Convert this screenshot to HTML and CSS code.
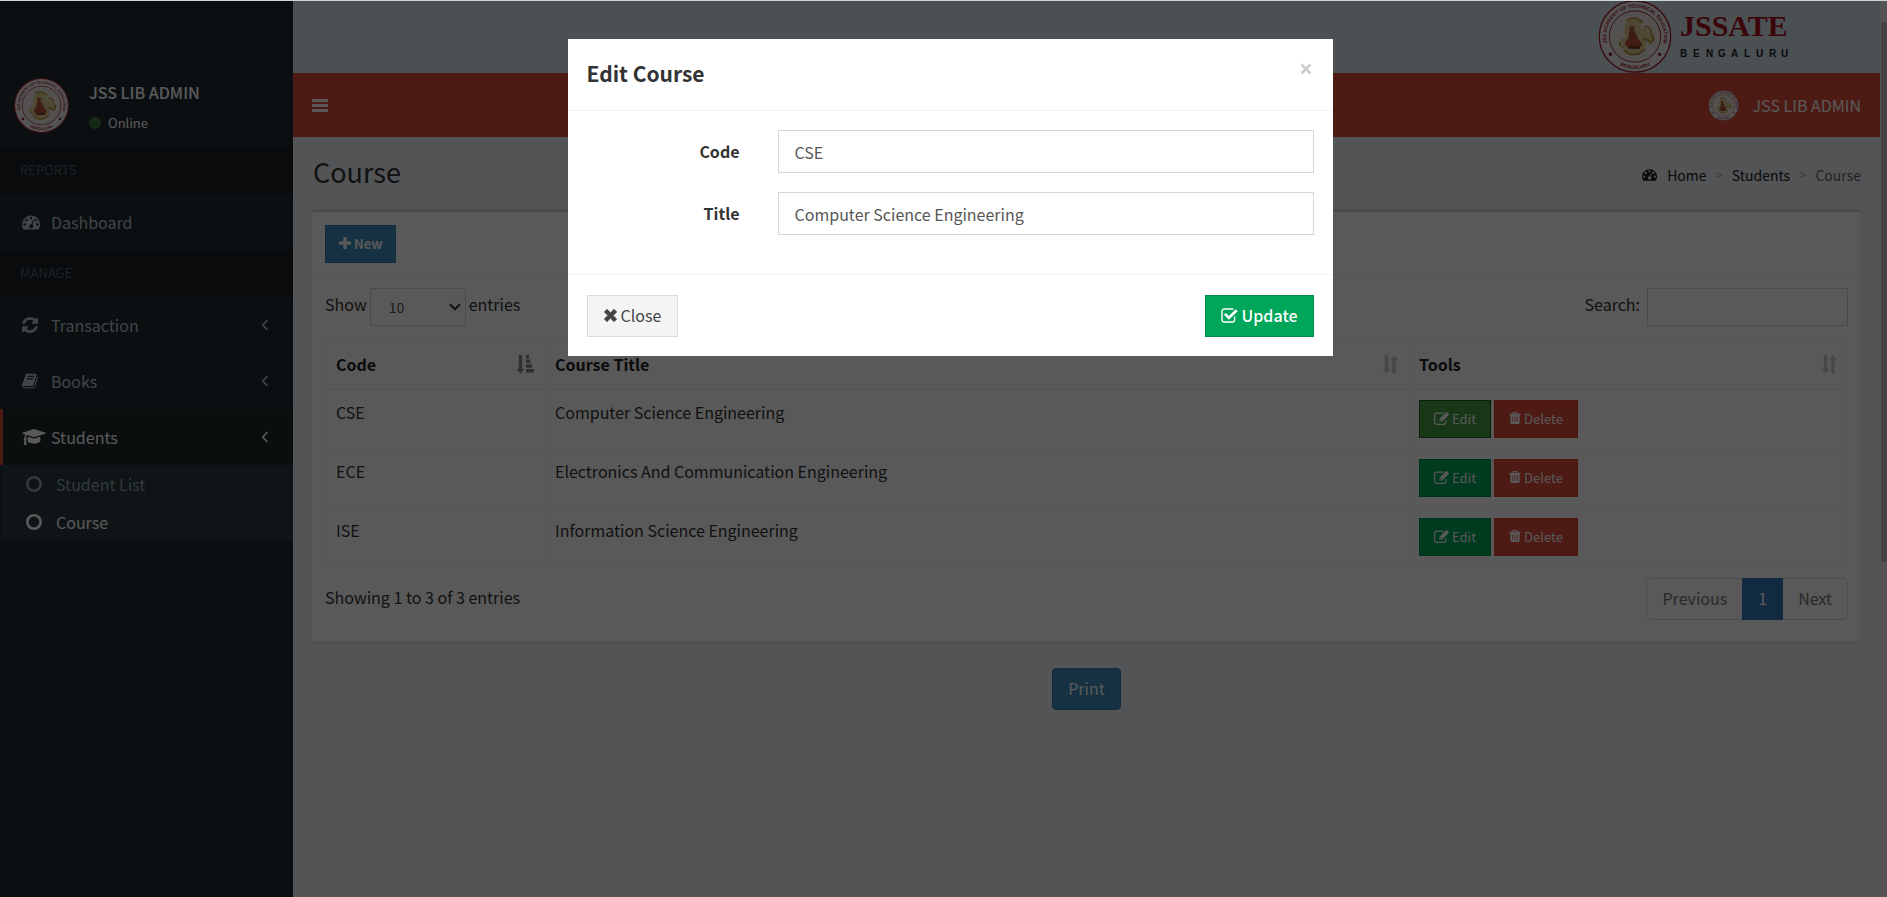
FILE: index.html
```
<!DOCTYPE html>
<html lang="en">
<head>
<meta charset="utf-8">
<title>Course</title>
<link rel="stylesheet" href="styles.css">
</head>
<body>
<svg class="defs" aria-hidden="true">
<symbol id="i-dash" viewBox="0 0 18 14"><path fill-rule="evenodd" d="M9 0a9 9 0 0 0-9 9c0 1.700.5 3.400 1.400 4.700.1.200.3.300.6.300h14c.3 0 .5-.1.600-.3A9 9 0 0 0 9 0ZM2.600 7.700a1.300 1.300 0 1 1 0 2.600 1.300 1.300 0 0 1 0-2.600ZM4.500 3.200a1.300 1.300 0 1 1 0 2.600 1.300 1.300 0 0 1 0-2.600ZM9 1.300a1.300 1.300 0 1 1 0 2.600 1.300 1.300 0 0 1 0-2.600Zm4.500 1.900a1.300 1.300 0 1 1 0 2.600 1.300 1.300 0 0 1 0-2.600Zm1.900 4.500a1.300 1.300 0 1 1 0 2.600 1.300 1.300 0 0 1 0-2.600ZM10.700 4.900l.9.300-1 3.900c.6.500.8 1.200.6 1.900a2 2 0 1 1-1.600-2.300Z"/></symbol>
<symbol id="i-refresh" viewBox="0 0 1536 1536"><path d="M1511 928q0 5-1 7-64 268-268 434.500T764 1536q-146 0-282.500-55T238 1324l-129 129q-19 19-45 19t-45-19-19-45V960q0-26 19-45t45-19h448q26 0 45 19t19 45-19 45l-137 137q71 66 161 102t187 36q134 0 250-65t186-179q11-17 53-117 8-23 30-23h192q13 0 22.500 9.500t9.500 22.500zm25-800v448q0 26-19 45t-45 19h-448q-26 0-45-19t-19-45 19-45l138-138Q969 256 768 256q-134 0-250 65T332 500q-11 17-53 117-8 23-30 23H50q-13 0-22.500-9.500T18 608v-7q65-268 270-434.500T768 0q146 0 284 55.500T1297 212l130-129q19-19 45-19t45 19 19 45z"/></symbol>
<symbol id="i-book" viewBox="0 -60 1664 1536"><path d="M1639 266q40 57 18 129l-275 906q-19 64-76.500 107.500T1183 1452H260q-77 0-148.500-53.500T12 1267q-24-67-2-127 0-4 3-27t4-37q1-8-3-21.500t-3-19.500q2-11 8-21t16.500-23.500T52 967q23-38 45-91.500t30-91.500q3-10 .5-30t-.5-28q3-11 17-28t17-23q21-36 42-92t25-90q1-9-2.500-32t.5-28q4-13 22-30.500t22-22.500q19-26 42.500-84.500T340 227q1-8-3-25.500t-2-26.500q2-8 9-18t18-23 17-21q8-12 16.500-30.500t15-35 16-36 19.500-32T469.500-44 506-55.500t47.500 5.500l-1 3q38-9 51-9h761q74 0 114 56t18 130l-274 906q-36 119-71.500 153.500T1023 1224H154q-27 0-38 15-11 16-1 43 24 70 144 70h923q29 0 56-15.500t35-41.500l300-987q7-22 5-57 38 15 59 43zM575 268q-4 13 2 22.500t20 9.500h608q13 0 25.500-9.500T1247 268l21-64q4-13-2-22.500t-20-9.500H638q-13 0-25.500 9.500T596 204zm-83 256q-4 13 2 22.500t20 9.500h608q13 0 25.500-9.500T1164 524l21-64q4-13-2-22.500t-20-9.500H555q-13 0-25.500 9.500T513 460z"/></symbol>
<symbol id="i-cap" viewBox="0 0 24 16"><path d="M18.200 7.600l.2 3.700c.1 2-3.100 3.400-6.400 3.400s-6.500-1.400-6.400-3.400l.2-3.700 5.700 1.800c.3.100.7.100 1 0ZM24 4.200c0 .2-.1.300-.3.400L12.100 8.200h-.2L5.100 6.100c-.6.500-1 1.500-1.100 2.900.5.300.8.700.8 1.200s-.2.900-.7 1.200l.6 4.100c0 .3-.2.500-.4.500H2.200c-.3 0-.5-.2-.4-.5l.6-4.100c-.4-.3-.7-.7-.7-1.200 0-.6.300-1 .8-1.300 0-1.100.3-2.400 1-3.300L.3 4.600C.1 4.500 0 4.400 0 4.200s.1-.3.300-.4L11.900.1h.2l11.600 3.700c.2.100.3.200.3.400Z"/></symbol>
<symbol id="i-left" viewBox="0 0 8 12"><path d="M6.500 1 1.800 6l4.700 5" fill="none" stroke="currentColor" stroke-width="1.700"/></symbol>
<symbol id="i-ring" viewBox="0 0 16 16"><circle cx="8" cy="8" r="6.700" fill="none" stroke="currentColor" stroke-width="2.600"/></symbol>
<symbol id="i-plus" viewBox="0 0 12 12"><path d="M4.300 0h3.400v4.300H12v3.400H7.700V12H4.300V7.700H0V4.300h4.300z"/></symbol>
<symbol id="i-x" viewBox="0 0 12 12"><path d="M2.700.3 6 3.500 9.300.3l2.400 2.400L8.500 6l3.200 3.300-2.400 2.400L6 8.500l-3.300 3.200L.3 9.300 3.500 6 .3 2.700z" stroke="currentColor" stroke-width=".6" stroke-linejoin="round"/></symbol>
<symbol id="i-times" viewBox="0 0 12 12"><path d="m1.500 1.500 9 9m0-9-9 9" fill="none" stroke="currentColor" stroke-width="2.600"/></symbol>
<symbol id="i-check" viewBox="0 0 17 15"><path d="M13.600 8.500v3.300a2.200 2.200 0 0 1-2.200 2.200H3.200A2.200 2.200 0 0 1 1 11.800V3.200A2.200 2.200 0 0 1 3.200 1h8.200l1 .2" fill="none" stroke="currentColor" stroke-width="1.400"/><path d="M3 6.700 4.800 5l3.100 3.100L14.700 1.300l2 2-8.800 8.500z"/></symbol>
<symbol id="i-edit" viewBox="0 0 15 13"><path d="M11.800 8v2.300a2 2 0 0 1-2 2H2.600a2 2 0 0 1-2-2V3.200a2 2 0 0 1 2-2h7" fill="none" stroke="currentColor" stroke-width="1.200"/><path fill-rule="evenodd" d="M5.500 9.500V6.700L12 .2c.3-.2.700-.2 1 0L14.700 2c.3.300.3.700 0 1L8.300 9.500Zm.9-2v1.100h1.300L6.900 7Z"/></symbol>
<symbol id="i-trash" viewBox="0 0 12 13"><path fill-rule="evenodd" d="M4.300 0h3.400c.6 0 1 .4 1.200 1L9.300 2H12v1.200h-1v8.300c0 .9-.5 1.500-1.200 1.500H2.200C1.500 13 1 12.400 1 11.500V3.200H0V2h2.700L3.100 1c.2-.6.600-1 1.200-1Zm0 1L3.900 2h4.200l-.4-1ZM3.200 4.800v6h.8v-6Zm2.400 0v6h.8v-6Zm2.400 0v6h.8v-6Z"/></symbol>
<symbol id="i-sort" viewBox="0 0 16 19"><path d="M2.800 0h3.400v14h2.200L4.500 18.500.5 14h2.300zM10.300 18.500h3.400V5h2.300L12 0 8.300 5h2z"/></symbol>
<symbol id="i-asc" viewBox="0 0 18 19"><path d="M2.800 0h3.400v14h2.200l-3.900 4.500L.5 14h2.300zM10 0h3v3.500h-3zM10 4.500h4.500V8H10zM10 9.300h6v3.500h-6zM10 14h8v3.500h-8z"/></symbol>
<symbol id="i-down" viewBox="0 0 12 8"><path d="m1 1.300 5 5 5-5" fill="none" stroke="currentColor" stroke-width="2"/></symbol>
<symbol id="i-seal" viewBox="0 0 74 74">
<circle cx="37" cy="37" r="36.200" fill="#f3efef" stroke="#a02030" stroke-width="1.400"/>
<circle cx="37" cy="37" r="26" fill="#eee8e2" stroke="#a02030" stroke-width="1"/>
<path id="arc" d="M11.500 51.200a29.200 29.200 0 1 1 51 0" fill="none"/>
<path id="arc2" d="M14 60.500a33 33 0 0 0 46 0" fill="none"/>
<text class="seal-text"><textPath href="#arc" startOffset="50%" text-anchor="middle">JSS ACADEMY OF TECHNICAL EDUCATION</textPath></text>
<text class="seal-text"><textPath href="#arc2" startOffset="50%" text-anchor="middle">BENGALURU</textPath></text>
<circle cx="12" cy="55" r="1.700" fill="#802030"/><circle cx="62" cy="55" r="1.700" fill="#802030"/>
<path d="M27 24c3-6 15-8 17-1l-2 6 6-3 3 8 6 3-4 8-4-4-2 9-6 6H30l-6-7 2-4-6-1 3-5 5-1-2-5z" fill="#dccb92"/>
<path d="M28 21q9-6 17 2M47 26q7 2 6 8M53 34q5 4 1 9M45 40q6-1 8 4M26 51q10 9 21-1M22 43q-2 3 3 5" fill="none" stroke="#b58b2e" stroke-width="1.600"/>
<circle cx="34" cy="29" r="2.800" fill="#b8603c"/><path d="M31 32q3-2 6 0l3 7 4 5v3q-10 3-17-1v-3l3-4z" fill="#b5553c"/><path d="M30 47h12v2.500H30z" fill="#6d3028"/>
</symbol>
</svg>

<div class="page">
<aside class="sidebar">
  <div class="user-panel">
    <svg class="avatar"><use href="#i-seal"/></svg>
    <div class="user-info"><p class="user-name">JSS LIB ADMIN</p><a class="status" href="#"><span class="dot"></span>Online</a></div>
  </div>
  <nav>
    <div class="nav-header">REPORTS</div>
    <a class="nav-item" href="#"><svg class="ico-dash"><use href="#i-dash"/></svg><span>Dashboard</span></a>
    <div class="nav-header">MANAGE</div>
    <a class="nav-item" href="#"><svg class="ico-nav"><use href="#i-refresh"/></svg><span>Transaction</span><svg class="chev"><use href="#i-left"/></svg></a>
    <a class="nav-item" href="#"><svg class="ico-nav"><use href="#i-book"/></svg><span>Books</span><svg class="chev"><use href="#i-left"/></svg></a>
    <a class="nav-item active" href="#"><svg class="ico-cap"><use href="#i-cap"/></svg><span>Students</span><svg class="chev"><use href="#i-left"/></svg></a>
    <div class="submenu">
      <a href="#"><svg class="ring"><use href="#i-ring"/></svg>Student List</a>
      <a class="current" href="#"><svg class="ring"><use href="#i-ring"/></svg>Course</a>
    </div>
  </nav>
</aside>

<div class="main">
  <div class="banner">
    <svg class="logo-seal"><use href="#i-seal"/></svg>
    <svg class="wordmark" viewBox="0 0 112 56"><text class="wm-a" x="0" y="31">JSSATE</text><text class="wm-b" x="0 13 26 38 51 64 76 89 101" y="52">BENGALURU</text></svg>
  </div>
  <header class="navbar">
    <button class="burger" aria-label="Toggle navigation"><i></i><i></i><i></i></button>
    <a class="nav-user" href="#"><svg class="nav-avatar"><use href="#i-seal"/></svg>JSS LIB ADMIN</a>
  </header>
  <section class="content-header">
    <h1>Course</h1>
    <div class="crumbs"><a href="#"><svg class="ico-crumb"><use href="#i-dash"/></svg>Home</a><i>&gt;</i><a href="#">Students</a><i>&gt;</i><span>Course</span></div>
  </section>
  <section class="box">
    <div class="box-header"><button class="btn sm new"><svg class="i12"><use href="#i-plus"/></svg>New</button></div>
    <div class="box-body">
      <div class="controls">
        <label>Show <span class="select-wrap"><select><option>10</option></select><svg class="arrow"><use href="#i-down"/></svg></span> entries</label>
        <label>Search: <input class="search" type="search"></label>
      </div>
      <table>
        <colgroup><col class="c1"><col class="c2"><col class="c3"></colgroup>
        <thead><tr>
          <th><div class="th">Code<svg class="asc"><use href="#i-asc"/></svg></div></th>
          <th><div class="th">Course Title<svg class="sort"><use href="#i-sort"/></svg></div></th>
          <th><div class="th">Tools<svg class="sort"><use href="#i-sort"/></svg></div></th>
        </tr></thead>
        <tbody>
          <tr><td>CSE</td><td>Computer Science Engineering</td><td><div class="tools"><button class="btn sm edit focus"><svg class="i15"><use href="#i-edit"/></svg>Edit</button><button class="btn sm del"><svg class="i12"><use href="#i-trash"/></svg>Delete</button></div></td></tr>
          <tr><td>ECE</td><td>Electronics And Communication Engineering</td><td><div class="tools"><button class="btn sm edit"><svg class="i15"><use href="#i-edit"/></svg>Edit</button><button class="btn sm del"><svg class="i12"><use href="#i-trash"/></svg>Delete</button></div></td></tr>
          <tr><td>ISE</td><td>Information Science Engineering</td><td><div class="tools"><button class="btn sm edit"><svg class="i15"><use href="#i-edit"/></svg>Edit</button><button class="btn sm del"><svg class="i12"><use href="#i-trash"/></svg>Delete</button></div></td></tr>
        </tbody>
      </table>
      <div class="table-foot">
        <span>Showing 1 to 3 of 3 entries</span>
        <div class="pager"><a href="#">Previous</a><a class="on" href="#">1</a><a href="#">Next</a></div>
      </div>
    </div>
  </section>
  <div class="print-row"><button class="btn print">Print</button></div>
</div>
<div class="scrollbar"><div class="thumb"></div></div>
</div>

<div class="backdrop">
  <form class="modal" role="dialog" aria-labelledby="modal-title">
    <div class="modal-header"><h4 id="modal-title">Edit Course</h4><button type="button" class="dismiss" aria-label="Dismiss"><svg><use href="#i-times"/></svg></button></div>
    <div class="modal-body">
      <div class="field"><label for="code">Code</label><input id="code" type="text" value="CSE"></div>
      <div class="field"><label for="title">Title</label><input id="title" type="text" value="Computer Science Engineering"></div>
    </div>
    <div class="modal-footer">
      <button type="button" class="btn close"><svg class="i13"><use href="#i-x"/></svg>Close</button>
      <button type="button" class="btn update"><svg class="i17"><use href="#i-check"/></svg>Update</button>
    </div>
  </form>
</div>
</body>
</html>
```
FILE: styles.css
```
* { box-sizing: border-box; }
body { margin: 0; font: 16px/25px "Noto Sans CJK SC", "Noto Sans", sans-serif; color: #333; background: #ecf0f5; }
a { color: inherit; text-decoration: none; }
p, h1, h4 { margin: 0; }
svg { fill: currentColor; flex: none; }
.defs { position: absolute; width: 0; height: 0; overflow: visible; }
button, input, select { font: inherit; border-radius: 0; }
.page { display: flex; min-height: 100vh; }

.sidebar { width: 293px; flex: none; background: #222d32; padding-top: 66px; color: #b8c7ce; }
.user-panel { display: flex; padding: 12px 14px; gap: 20px; height: 81px; }
.avatar { width: 55px; height: 55px; }
.user-name { font-weight: 500; color: #fff; line-height: 28px; }
.status { display: flex; align-items: center; gap: 7px; color: #fff; font-size: 13px; line-height: 34px; }
.dot { width: 12px; height: 12px; border-radius: 50%; background: #3c763d; }
.nav-header { background: #1a2226; color: #4b646f; font-size: 13px; padding: 0 20px 2px; line-height: 45px; }
.nav-item { display: flex; align-items: center; height: 56px; padding: 0 22px 0 19px; border-left: 3px solid transparent; }
.nav-item span { flex: 1; }
.ico-dash { width: 18px; height: 15px; margin-right: 11px; }
.ico-nav { width: 16px; height: 16px; margin-right: 13px; }
.ico-cap { width: 24px; height: 16px; margin-right: 5px; }
.chev { width: 8px; height: 12px; margin-right: 2px; }
.nav-item.active { background: #1e282c; border-left-color: #dd4b39; color: #fff; }
.submenu { background: #2c3b41; margin-left: 1px; }
.submenu a { display: flex; align-items: center; gap: 14px; height: 38px; padding-left: 25px; color: #8aa4af; }
.submenu a.current { color: #fff; }
.ring { width: 16px; height: 16px; }

.main { flex: 1; min-width: 0; display: flex; flex-direction: column; }
.banner { height: 73px; background: #d6e4ee; display: flex; justify-content: flex-end; padding: 0 88px 0 0; gap: 8px; }
.logo-seal { width: 74px; height: 73px; }
.seal-text { font: bold 5px "Liberation Sans", sans-serif; fill: #a02030; }
.wordmark { width: 112px; height: 56px; margin-top: 5px; overflow: visible; }
.wm-a { font: bold 30px "Liberation Serif", serif; fill: #a8101c; }
.wm-b { font: bold 10px "Liberation Sans", sans-serif; fill: #222; }
.navbar { height: 64px; background: #dd4b39; color: #fff; display: flex; align-items: center; justify-content: space-between; padding: 0 19px; }
.burger { background: none; border: 0; padding: 0; width: 16px; display: grid; gap: 2px; }
.burger i { height: 3px; background: #fff; }
.nav-user { display: flex; align-items: center; gap: 14px; }
.nav-avatar { width: 31px; height: 31px; }
.content-header { display: flex; align-items: flex-start; justify-content: space-between; padding: 18px 19px 0 20px; height: 72px; }
h1 { font-size: 27px; font-weight: 400; line-height: 34px; }
.crumbs { display: flex; align-items: center; gap: 9px; font-size: 14px; line-height: 40px; color: #666; }
.crumbs a { display: flex; align-items: center; gap: 10px; color: #222; }
.crumbs i { font-style: normal; color: #aaa; font-size: 13px; }
.ico-crumb { width: 15px; height: 12px; }

.box { margin: 0 20px 0 19px; background: #fff; border-top: 3px solid #d2d6de; border-radius: 4px; box-shadow: 0 1px 1px rgba(0,0,0,.1); }
.box-header { display: flex; padding: 13px 13px 12px; border-bottom: 1px solid #f4f4f4; }
.btn { display: inline-flex; align-items: center; justify-content: center; gap: 4px; border: 1px solid; color: #fff; padding: 0 15px 2px; height: 42px; }
.btn.sm { font-size: 13px; height: 38px; padding: 0 13px 2px; gap: 3px; }
.new { background: #3c8dbc; border-color: #367fa9; font-weight: 700; }
.i12 { width: 12px; height: 12px; }
.i13 { width: 13px; height: 13px; }
.i15 { width: 15px; height: 13px; }
.i17 { width: 17px; height: 15px; }
.box-body { padding: 12px 12px 22px 13px; }
.controls { display: flex; justify-content: space-between; height: 52px; line-height: 33px; }
.controls label { display: flex; gap: 3px; }
.select-wrap { display: inline-grid; align-items: center; height: 38px; width: 96px; }
.select-wrap > * { grid-area: 1 / 1; }
.select-wrap select { appearance: none; width: 96px; height: 38px; border: 1px solid #d2d6de; background: #fff; padding: 0 18px; font-size: 14px; color: #555; }
.arrow { width: 12px; height: 8px; justify-self: end; margin-right: 5px; }
.search { width: 201px; height: 38px; border: 1px solid #d2d6de; background: #fff; margin-left: 4px; }
table { width: 100%; border-collapse: collapse; table-layout: fixed; border: 1px solid #f4f4f4; }
.c1 { width: 219px; }
.c3 { width: 439px; }
th, td { border: 1px solid #f4f4f4; text-align: left; vertical-align: top; padding: 10px; }
th { border-bottom-width: 2px; font-weight: 700; color: #222; }
td { color: #333; height: 59px; }
.th { display: flex; justify-content: space-between; align-items: center; line-height: 27px; }
.sort { width: 16px; height: 19px; color: #ccc; }
.asc { width: 18px; height: 19px; color: #888; }
.tools { display: flex; gap: 3px; }
.tools .btn { padding: 0 14px 2px; }
.edit { background: #00a65a; border-color: #008d4c; }
.edit.focus { background: #449d44; border-color: #255625; }
.del { background: #dd4b39; border-color: #d73925; }
.table-foot { display: flex; justify-content: space-between; padding-top: 11px; }
.table-foot > span { line-height: 38px; }
.pager { display: flex; height: 42px; line-height: 39px; border: 1px solid #ddd; border-radius: 4px; color: #777; }
.pager a { padding: 0 15px; }
.pager .on { background: #337ab7; color: #fff; margin: -1px 0; padding: 0 16px; line-height: 41px; }
.print-row { display: flex; justify-content: center; padding: 26px 0 0; }
.print { background: #3c8dbc; border-color: #367fa9; border-radius: 4px; }
.scrollbar { width: 7px; background: #f1f1f1; padding: 22px 0 0 1px; }
.thumb { height: 540px; background: #c1c1c1; }

.backdrop { position: fixed; inset: 0; padding-left: 13px; background: rgba(0,0,0,.65); border-top: 1px solid #c9d9da; }
.modal { width: 765px; margin: 38px auto 0; background: #fff; }
.modal-header { display: flex; justify-content: space-between; align-items: flex-start; padding: 18px 19px; height: 72px; border-bottom: 1px solid #f4f4f4; }
h4 { font-size: 21px; line-height: 32px; }
.dismiss { border: 0; background: none; padding: 6px 2px; color: #ccc; line-height: 0; }
.dismiss svg { width: 12px; height: 12px; }
.modal-body { padding: 19px; display: grid; gap: 19px; height: 164px; align-content: start; border-bottom: 1px solid #f4f4f4; }
.field { display: grid; grid-template-columns: 153px 1fr; gap: 38px; align-items: center; }
.field label { text-align: right; font-weight: 700; }
.field input { height: 43px; width: 100%; border: 1px solid #d2d6de; padding: 0 16px; color: #555; }
.modal-footer { display: flex; justify-content: space-between; padding: 20px 19px 19px; }
.close { background: #f4f4f4; border-color: #ddd; color: #444; padding: 0 16px 2px; }
.update { background: #00a65a; border-color: #008d4c; font-weight: 500; }
```
